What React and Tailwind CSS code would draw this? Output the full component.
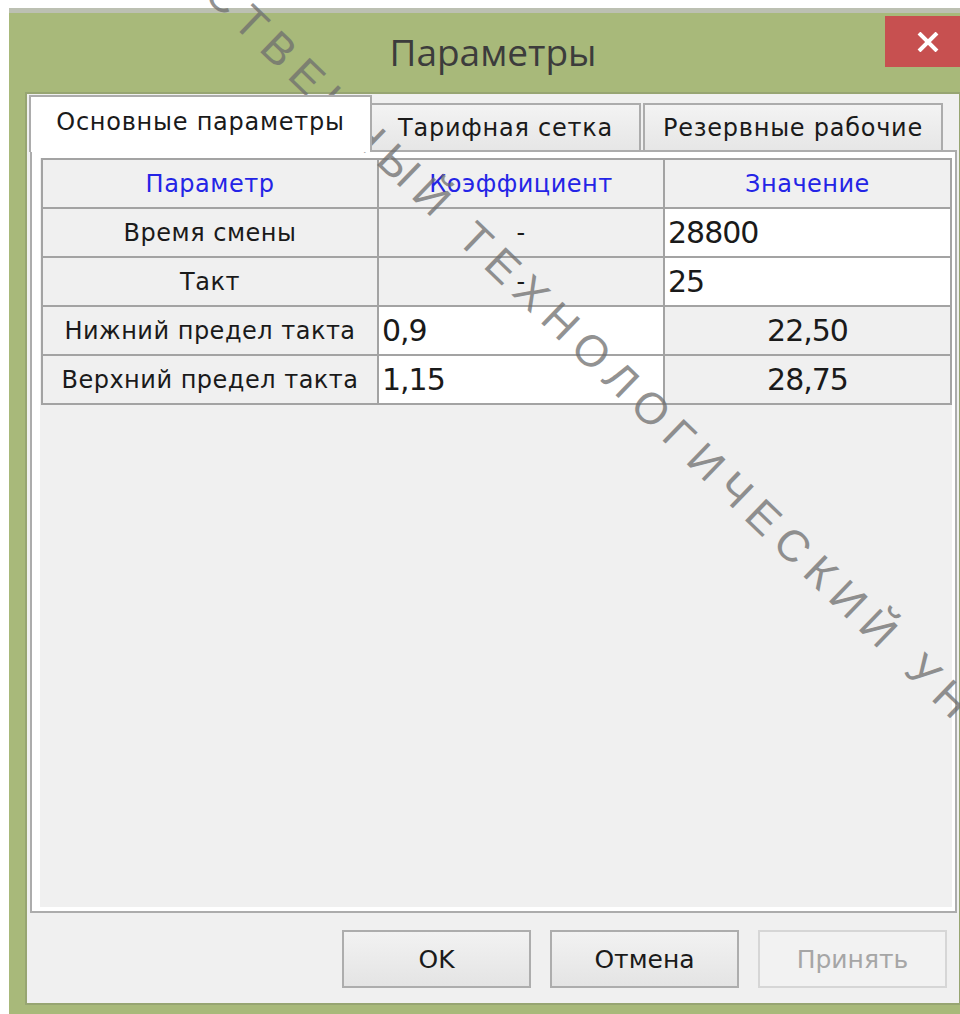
import React from 'react';

const rows = [
    { name: 'Время смены', coef: '-', value: '28800', edit: 'value' },
    { name: 'Такт', coef: '-', value: '25', edit: 'value' },
    { name: 'Нижний предел такта', coef: '0,9', value: '22,50', edit: 'coef' },
    { name: 'Верхний предел такта', coef: '1,15', value: '28,75', edit: 'coef' },
];

const label = "text-[24px] tracking-[0.5px] leading-none text-[#1a1a1a]";
const tab = "text-[24px] tracking-[0.75px] leading-none text-[#1a1a1a]";
const number = "text-[30px] tracking-[-1px] leading-none text-[#1a1a1a]";

// серая ячейка с текстом по центру
const Cell = ({ children, className = '' }) => (
    <div className={`bg-[#f0f0f0] flex items-center justify-center ${className}`}>{children}</div>
);

// белая ячейка ввода, текст прижат влево
const Edit = ({ children }) => (
    <div className={`bg-white flex items-center pl-[3px] ${number}`}>{children}</div>
);

const Button = ({ children, disabled }) => (
    <button
        className={`w-[189px] h-[58px] border-2 text-[25px] leading-none flex items-center justify-center ${disabled
            ? 'border-[#d6d6d6] bg-[#f2f2f2] text-[#a6a6a6]'
            : 'border-[#adadad] bg-gradient-to-b from-[#f2f2f2] to-[#e4e4e4] text-[#1a1a1a]'
            }`}
    >
        {children}
    </button>
);

export default function App() {
    return (
        <div className="relative w-[960px] h-[1014px] overflow-hidden bg-white font-['DejaVu_Sans',sans-serif]">
            {/* окно диалога */}
            <div className="ml-[9px] mt-[8px] w-[968px] h-[1006px] flex flex-col bg-[#a8b97a] border-t-[5px] border-[#bcc0b2] px-[16px] pb-[9px]">
                {/* заголовок */}
                <div className="relative -mx-[16px] h-[79px] shrink-0 flex items-center justify-center pb-[2px]">
                    <span className="font-['Open_Sans',sans-serif] text-[37px] leading-none text-[#3c3c3c]">Параметры</span>
                    <div className="absolute right-[7px] top-[3px] w-[85px] h-[51px] bg-[#c75050] flex items-center justify-center">
                        <svg width="22" height="20" viewBox="0 0 22 20">
                            <path d="M2 1 L20 19 M20 1 L2 19" stroke="white" strokeWidth="4" />
                        </svg>
                    </div>
                </div>

                {/* тело окна */}
                <div className="flex-1 flex flex-col bg-[#f0f0f0] border-2 border-[#97a572] pt-[1px]">
                    {/* вкладки */}
                    <div className="relative flex items-start ml-[2px] h-[57px] -mb-[2px] shrink-0">
                        <div className={`relative z-10 w-[343px] h-[57px] bg-white border-2 border-b-0 border-[#acacac] flex items-center justify-center pb-[6px] ${tab}`}>
                            Основные параметры
                        </div>
                        <div className={`-ml-[2px] mt-[8px] w-[271px] h-[47px] bg-gradient-to-b from-[#f3f3f3] to-[#e6e6e6] border-2 border-b-0 border-[#acacac] flex items-center justify-center ${tab}`}>
                            Тарифная сетка
                        </div>
                        <div className={`ml-[2px] mt-[8px] w-[300px] h-[47px] bg-gradient-to-b from-[#f3f3f3] to-[#e6e6e6] border-2 border-b-0 border-[#acacac] flex items-center justify-center ${tab}`}>
                            Резервные рабочие
                        </div>
                    </div>

                    {/* страница вкладки */}
                    <div className="ml-[3px] mr-[2px] h-[763px] shrink-0 flex border-2 border-[#acacac] bg-white pl-[8px] pt-[6px] pr-[3px] pb-[4px]">
                        <div className="flex-1 bg-[#f0f0f0]">
                            <div className="ml-[1px] w-fit grid grid-cols-[334px_284px_285px] auto-rows-[47px] gap-[2px] p-[2px] bg-[#a3a3a3]">
                                <Cell className="text-[24px] tracking-[0.5px] leading-none text-[#2424e6]">Параметр</Cell>
                                <Cell className="text-[24px] tracking-[0.5px] leading-none text-[#2424e6]">Коэффициент</Cell>
                                <Cell className="text-[24px] tracking-[0.5px] leading-none text-[#2424e6]">Значение</Cell>
                                {rows.map((r) => (
                                    <React.Fragment key={r.name}>
                                        <Cell className={label}>{r.name}</Cell>
                                        {r.edit === 'coef' ? <Edit>{r.coef}</Edit> : <Cell className={label}>{r.coef}</Cell>}
                                        {r.edit === 'value' ? <Edit>{r.value}</Edit> : <Cell className={number}>{r.value}</Cell>}
                                    </React.Fragment>
                                ))}
                            </div>
                        </div>
                    </div>

                    {/* кнопки */}
                    <div className="flex justify-end gap-[19px] mt-[17px] mr-[12px]">
                        <Button>OK</Button>
                        <Button>Отмена</Button>
                        <Button disabled>Принять</Button>
                    </div>
                </div>
            </div>

            {/* водяной знак */}
            <div className="pointer-events-none select-none absolute left-[466px] top-[208px] origin-left rotate-[44deg] whitespace-nowrap font-['Liberation_Sans',sans-serif] text-[44px] leading-none tracking-[10px] text-[#6e6e6e] opacity-75">
                <span className="absolute right-full top-0">ГОСУДАРСТВЕННЫЙ&nbsp;</span>
                ТЕХНОЛОГИЧЕСКИЙ УНИВЕРСИТЕТ
            </div>
        </div>
    );
}
